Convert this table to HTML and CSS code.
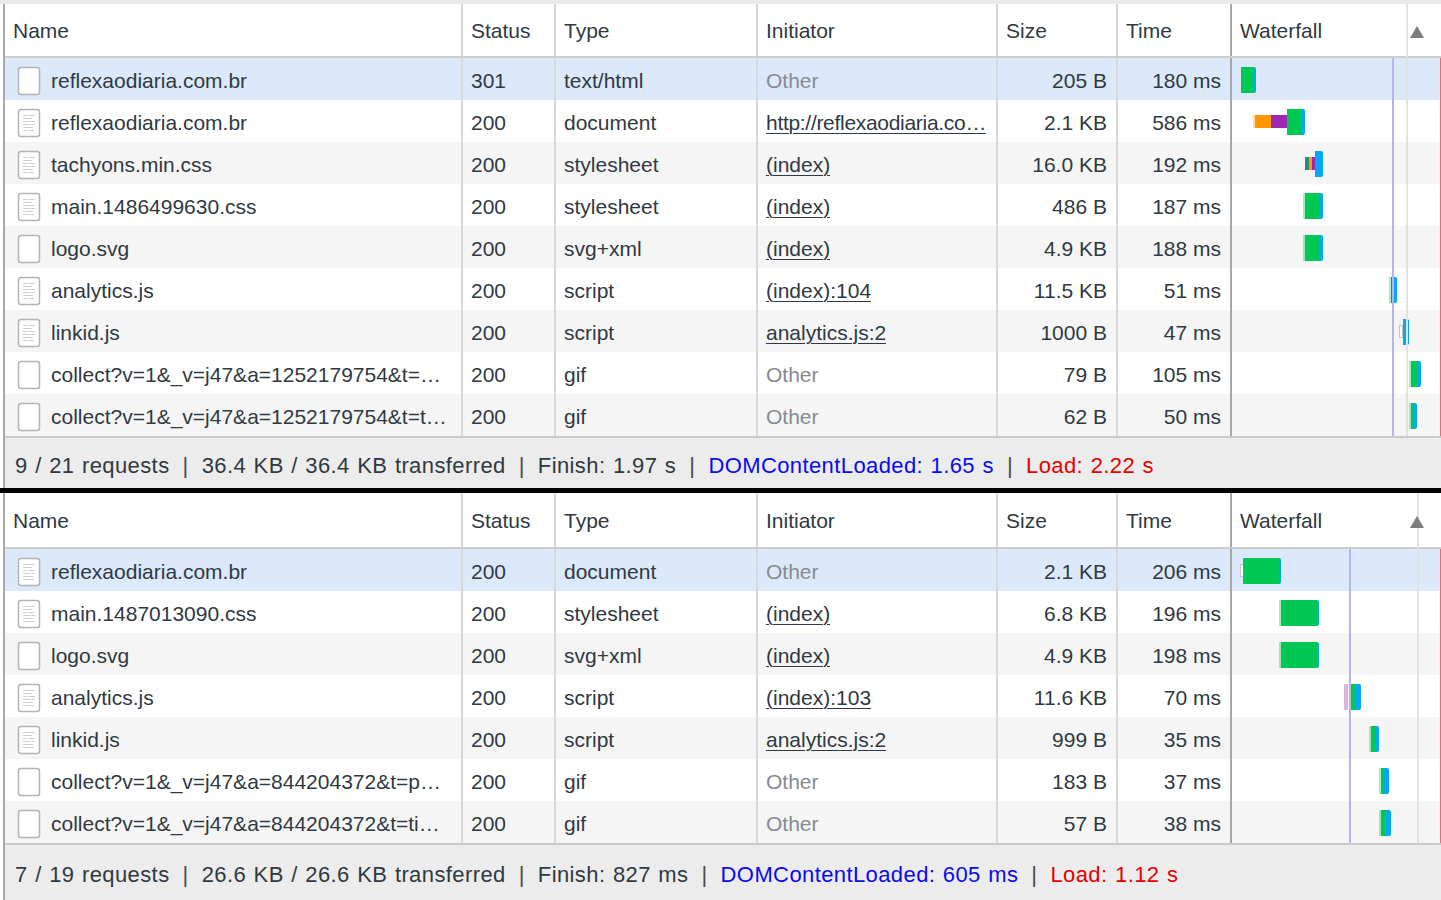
FILE: index.html
```html
<!DOCTYPE html>
<html>
<head>
<meta charset="utf-8">
<link rel="stylesheet" href="styles.css">
</head>
<body>
<div class="strip"></div>

<section class="panel panel-a">
  <div class="table">
    <div class="cols head">
      <div class="cell">Name</div>
      <div class="cell">Status</div>
      <div class="cell">Type</div>
      <div class="cell">Initiator</div>
      <div class="cell">Size</div>
      <div class="cell time">Time</div>
      <div class="cell wf head-wf"><span class="wf-title">Waterfall</span><span class="tri"></span></div>
    </div>
    <div class="body">
      <div class="cols row sel">
        <div class="cell name"><svg class="ico" viewBox="0 0 24 30"><rect x="1.5" y="1.5" width="21" height="27" rx="2.5" fill="#fff" stroke="#b4b4b4" stroke-width="1.5"/></svg><span class="txt">reflexaodiaria.com.br</span></div>
        <div class="cell">301</div>
        <div class="cell">text/html</div>
        <div class="cell"><span class="txt dim">Other</span></div>
        <div class="cell num">205 B</div>
        <div class="cell num time">180 ms</div>
        <div class="cell wf"><span class="bar g" style="left:9px;width:12px"></span><span class="bar b" style="left:21px;width:3px"></span></div>
      </div>
      <div class="cols row">
        <div class="cell name"><svg class="ico" viewBox="0 0 24 30"><rect x="1.5" y="1.5" width="21" height="27" rx="2.5" fill="#fff" stroke="#b4b4b4" stroke-width="1.5"/><path d="M6 7.5h5M12 7.5h6M6 10.5h9M6 13.5h4M11 13.5h7M6 16.5h7M14 16.5h4M6 19.5h10M6 22.5h5M12 22.5h5" stroke="#cfcfcf" stroke-width="1.2"/></svg><span class="txt">reflexaodiaria.com.br</span></div>
        <div class="cell">200</div>
        <div class="cell">document</div>
        <div class="cell ini"><span class="txt link">http://reflexaodiaria.co…</span></div>
        <div class="cell num">2.1 KB</div>
        <div class="cell num time">586 ms</div>
        <div class="cell wf"><span class="bar thin o fade" style="left:21px;width:2px"></span><span class="bar thin o" style="left:23px;width:16px"></span><span class="bar thin p" style="left:39px;width:16px"></span><span class="bar g" style="left:55px;width:15px"></span><span class="bar b" style="left:70px;width:3px"></span></div>
      </div>
      <div class="cols row">
        <div class="cell name"><svg class="ico" viewBox="0 0 24 30"><rect x="1.5" y="1.5" width="21" height="27" rx="2.5" fill="#fff" stroke="#b4b4b4" stroke-width="1.5"/><path d="M6 7.5h5M12 7.5h6M6 10.5h9M6 13.5h4M11 13.5h7M6 16.5h7M14 16.5h4M6 19.5h10M6 22.5h5M12 22.5h5" stroke="#cfcfcf" stroke-width="1.2"/></svg><span class="txt">tachyons.min.css</span></div>
        <div class="cell">200</div>
        <div class="cell">stylesheet</div>
        <div class="cell"><span class="txt link">(index)</span></div>
        <div class="cell num">16.0 KB</div>
        <div class="cell num time">192 ms</div>
        <div class="cell wf"><span class="bar thin t" style="left:73px;width:4px"></span><span class="bar thin o" style="left:77px;width:3px"></span><span class="bar thin p" style="left:80px;width:3px"></span><span class="bar b" style="left:83px;width:8px"></span></div>
      </div>
      <div class="cols row">
        <div class="cell name"><svg class="ico" viewBox="0 0 24 30"><rect x="1.5" y="1.5" width="21" height="27" rx="2.5" fill="#fff" stroke="#b4b4b4" stroke-width="1.5"/><path d="M6 7.5h5M12 7.5h6M6 10.5h9M6 13.5h4M11 13.5h7M6 16.5h7M14 16.5h4M6 19.5h10M6 22.5h5M12 22.5h5" stroke="#cfcfcf" stroke-width="1.2"/></svg><span class="txt">main.1486499630.css</span></div>
        <div class="cell">200</div>
        <div class="cell">stylesheet</div>
        <div class="cell"><span class="txt link">(index)</span></div>
        <div class="cell num">486 B</div>
        <div class="cell num time">187 ms</div>
        <div class="cell wf"><span class="bar g fade" style="left:71px;width:2px"></span><span class="bar g" style="left:73px;width:14px"></span><span class="bar b" style="left:87px;width:4px"></span></div>
      </div>
      <div class="cols row">
        <div class="cell name"><svg class="ico" viewBox="0 0 24 30"><rect x="1.5" y="1.5" width="21" height="27" rx="2.5" fill="#fff" stroke="#b4b4b4" stroke-width="1.5"/></svg><span class="txt">logo.svg</span></div>
        <div class="cell">200</div>
        <div class="cell">svg+xml</div>
        <div class="cell"><span class="txt link">(index)</span></div>
        <div class="cell num">4.9 KB</div>
        <div class="cell num time">188 ms</div>
        <div class="cell wf"><span class="bar g fade" style="left:71px;width:2px"></span><span class="bar g" style="left:73px;width:14px"></span><span class="bar b" style="left:87px;width:4px"></span></div>
      </div>
      <div class="cols row">
        <div class="cell name"><svg class="ico" viewBox="0 0 24 30"><rect x="1.5" y="1.5" width="21" height="27" rx="2.5" fill="#fff" stroke="#b4b4b4" stroke-width="1.5"/><path d="M6 7.5h5M12 7.5h6M6 10.5h9M6 13.5h4M11 13.5h7M6 16.5h7M14 16.5h4M6 19.5h10M6 22.5h5M12 22.5h5" stroke="#cfcfcf" stroke-width="1.2"/></svg><span class="txt">analytics.js</span></div>
        <div class="cell">200</div>
        <div class="cell">script</div>
        <div class="cell"><span class="txt link">(index):104</span></div>
        <div class="cell num">11.5 KB</div>
        <div class="cell num time">51 ms</div>
        <div class="cell wf"><span class="bar g fade" style="left:157px;width:2px"></span><span class="bar t" style="left:159px;width:1px"></span><span class="bar b" style="left:160px;width:5px"></span></div>
      </div>
      <div class="cols row">
        <div class="cell name"><svg class="ico" viewBox="0 0 24 30"><rect x="1.5" y="1.5" width="21" height="27" rx="2.5" fill="#fff" stroke="#b4b4b4" stroke-width="1.5"/><path d="M6 7.5h5M12 7.5h6M6 10.5h9M6 13.5h4M11 13.5h7M6 16.5h7M14 16.5h4M6 19.5h10M6 22.5h5M12 22.5h5" stroke="#cfcfcf" stroke-width="1.2"/></svg><span class="txt">linkid.js</span></div>
        <div class="cell">200</div>
        <div class="cell">script</div>
        <div class="cell"><span class="txt link">analytics.js:2</span></div>
        <div class="cell num">1000 B</div>
        <div class="cell num time">47 ms</div>
        <div class="cell wf"><span class="bar thin q" style="left:167px;width:4px"></span><span class="bar b" style="left:171px;width:6px"></span></div>
      </div>
      <div class="cols row">
        <div class="cell name"><svg class="ico" viewBox="0 0 24 30"><rect x="1.5" y="1.5" width="21" height="27" rx="2.5" fill="#fff" stroke="#b4b4b4" stroke-width="1.5"/></svg><span class="txt">collect?v=1&amp;_v=j47&amp;a=1252179754&amp;t=…</span></div>
        <div class="cell">200</div>
        <div class="cell">gif</div>
        <div class="cell"><span class="txt dim">Other</span></div>
        <div class="cell num">79 B</div>
        <div class="cell num time">105 ms</div>
        <div class="cell wf"><span class="bar g fade" style="left:177px;width:2px"></span><span class="bar g" style="left:179px;width:7px"></span><span class="bar b" style="left:186px;width:3px"></span></div>
      </div>
      <div class="cols row">
        <div class="cell name"><svg class="ico" viewBox="0 0 24 30"><rect x="1.5" y="1.5" width="21" height="27" rx="2.5" fill="#fff" stroke="#b4b4b4" stroke-width="1.5"/></svg><span class="txt">collect?v=1&amp;_v=j47&amp;a=1252179754&amp;t=t…</span></div>
        <div class="cell">200</div>
        <div class="cell">gif</div>
        <div class="cell"><span class="txt dim">Other</span></div>
        <div class="cell num">62 B</div>
        <div class="cell num time">50 ms</div>
        <div class="cell wf"><span class="bar g fade" style="left:177px;width:2px"></span><span class="bar g" style="left:179px;width:2px"></span><span class="bar b" style="left:181px;width:4px"></span></div>
      </div>
    </div>
    <div class="wf-overlay">
      <span class="vline grid" style="left:174px"></span>
      <span class="vline dcl" style="left:160px"></span>
      <span class="vline load" style="left:208px"></span>
    </div>
  </div>
  <div class="footer">
    <span>9 / 21 requests</span><span class="sep">|</span>
    <span>36.4 KB / 36.4 KB transferred</span><span class="sep">|</span>
    <span>Finish: 1.97 s</span><span class="sep">|</span>
    <span class="blue">DOMContentLoaded: 1.65 s</span><span class="sep">|</span>
    <span class="red">Load: 2.22 s</span>
  </div>
</section>

<div class="divider"></div>

<section class="panel panel-b">
  <div class="table">
    <div class="cols head">
      <div class="cell">Name</div>
      <div class="cell">Status</div>
      <div class="cell">Type</div>
      <div class="cell">Initiator</div>
      <div class="cell">Size</div>
      <div class="cell time">Time</div>
      <div class="cell wf head-wf"><span class="wf-title">Waterfall</span><span class="tri"></span></div>
    </div>
    <div class="body">
      <div class="cols row sel">
        <div class="cell name"><svg class="ico" viewBox="0 0 24 30"><rect x="1.5" y="1.5" width="21" height="27" rx="2.5" fill="#fff" stroke="#b4b4b4" stroke-width="1.5"/><path d="M6 7.5h5M12 7.5h6M6 10.5h9M6 13.5h4M11 13.5h7M6 16.5h7M14 16.5h4M6 19.5h10M6 22.5h5M12 22.5h5" stroke="#cfcfcf" stroke-width="1.2"/></svg><span class="txt">reflexaodiaria.com.br</span></div>
        <div class="cell">200</div>
        <div class="cell">document</div>
        <div class="cell"><span class="txt dim">Other</span></div>
        <div class="cell num">2.1 KB</div>
        <div class="cell num time">206 ms</div>
        <div class="cell wf"><span class="bar thin q" style="left:8px;width:4px"></span><span class="bar g" style="left:11px;width:36px"></span><span class="bar b" style="left:47px;width:2px"></span></div>
      </div>
      <div class="cols row">
        <div class="cell name"><svg class="ico" viewBox="0 0 24 30"><rect x="1.5" y="1.5" width="21" height="27" rx="2.5" fill="#fff" stroke="#b4b4b4" stroke-width="1.5"/><path d="M6 7.5h5M12 7.5h6M6 10.5h9M6 13.5h4M11 13.5h7M6 16.5h7M14 16.5h4M6 19.5h10M6 22.5h5M12 22.5h5" stroke="#cfcfcf" stroke-width="1.2"/></svg><span class="txt">main.1487013090.css</span></div>
        <div class="cell">200</div>
        <div class="cell">stylesheet</div>
        <div class="cell"><span class="txt link">(index)</span></div>
        <div class="cell num">6.8 KB</div>
        <div class="cell num time">196 ms</div>
        <div class="cell wf"><span class="bar g fade" style="left:47px;width:2px"></span><span class="bar g" style="left:49px;width:36px"></span><span class="bar b" style="left:85px;width:2px"></span></div>
      </div>
      <div class="cols row">
        <div class="cell name"><svg class="ico" viewBox="0 0 24 30"><rect x="1.5" y="1.5" width="21" height="27" rx="2.5" fill="#fff" stroke="#b4b4b4" stroke-width="1.5"/></svg><span class="txt">logo.svg</span></div>
        <div class="cell">200</div>
        <div class="cell">svg+xml</div>
        <div class="cell"><span class="txt link">(index)</span></div>
        <div class="cell num">4.9 KB</div>
        <div class="cell num time">198 ms</div>
        <div class="cell wf"><span class="bar g fade" style="left:47px;width:2px"></span><span class="bar g" style="left:49px;width:36px"></span><span class="bar b" style="left:85px;width:2px"></span></div>
      </div>
      <div class="cols row">
        <div class="cell name"><svg class="ico" viewBox="0 0 24 30"><rect x="1.5" y="1.5" width="21" height="27" rx="2.5" fill="#fff" stroke="#b4b4b4" stroke-width="1.5"/><path d="M6 7.5h5M12 7.5h6M6 10.5h9M6 13.5h4M11 13.5h7M6 16.5h7M14 16.5h4M6 19.5h10M6 22.5h5M12 22.5h5" stroke="#cfcfcf" stroke-width="1.2"/></svg><span class="txt">analytics.js</span></div>
        <div class="cell">200</div>
        <div class="cell">script</div>
        <div class="cell"><span class="txt link">(index):103</span></div>
        <div class="cell num">11.6 KB</div>
        <div class="cell num time">70 ms</div>
        <div class="cell wf"><span class="bar p fade" style="left:112px;width:4px"></span><span class="bar g" style="left:117px;width:6px"></span><span class="bar b" style="left:123px;width:6px"></span></div>
      </div>
      <div class="cols row">
        <div class="cell name"><svg class="ico" viewBox="0 0 24 30"><rect x="1.5" y="1.5" width="21" height="27" rx="2.5" fill="#fff" stroke="#b4b4b4" stroke-width="1.5"/><path d="M6 7.5h5M12 7.5h6M6 10.5h9M6 13.5h4M11 13.5h7M6 16.5h7M14 16.5h4M6 19.5h10M6 22.5h5M12 22.5h5" stroke="#cfcfcf" stroke-width="1.2"/></svg><span class="txt">linkid.js</span></div>
        <div class="cell">200</div>
        <div class="cell">script</div>
        <div class="cell"><span class="txt link">analytics.js:2</span></div>
        <div class="cell num">999 B</div>
        <div class="cell num time">35 ms</div>
        <div class="cell wf"><span class="bar g fade" style="left:137px;width:2px"></span><span class="bar g" style="left:139px;width:4px"></span><span class="bar b" style="left:143px;width:4px"></span></div>
      </div>
      <div class="cols row">
        <div class="cell name"><svg class="ico" viewBox="0 0 24 30"><rect x="1.5" y="1.5" width="21" height="27" rx="2.5" fill="#fff" stroke="#b4b4b4" stroke-width="1.5"/></svg><span class="txt">collect?v=1&amp;_v=j47&amp;a=844204372&amp;t=p…</span></div>
        <div class="cell">200</div>
        <div class="cell">gif</div>
        <div class="cell"><span class="txt dim">Other</span></div>
        <div class="cell num">183 B</div>
        <div class="cell num time">37 ms</div>
        <div class="cell wf"><span class="bar g fade" style="left:147px;width:2px"></span><span class="bar g" style="left:149px;width:3px"></span><span class="bar b" style="left:152px;width:5px"></span></div>
      </div>
      <div class="cols row">
        <div class="cell name"><svg class="ico" viewBox="0 0 24 30"><rect x="1.5" y="1.5" width="21" height="27" rx="2.5" fill="#fff" stroke="#b4b4b4" stroke-width="1.5"/></svg><span class="txt">collect?v=1&amp;_v=j47&amp;a=844204372&amp;t=ti…</span></div>
        <div class="cell">200</div>
        <div class="cell">gif</div>
        <div class="cell"><span class="txt dim">Other</span></div>
        <div class="cell num">57 B</div>
        <div class="cell num time">38 ms</div>
        <div class="cell wf"><span class="bar g fade" style="left:147px;width:2px"></span><span class="bar g" style="left:149px;width:5px"></span><span class="bar b" style="left:154px;width:5px"></span></div>
      </div>
    </div>
    <div class="wf-overlay">
      <span class="vline grid" style="left:185px"></span>
      <span class="vline dcl" style="left:117px"></span>
      <span class="vline load" style="left:208px"></span>
    </div>
  </div>
  <div class="footer">
    <span>7 / 19 requests</span><span class="sep">|</span>
    <span>26.6 KB / 26.6 KB transferred</span><span class="sep">|</span>
    <span>Finish: 827 ms</span><span class="sep">|</span>
    <span class="blue">DOMContentLoaded: 605 ms</span><span class="sep">|</span>
    <span class="red">Load: 1.12 s</span>
  </div>
</section>
</body>
</html>
```

FILE: styles.css
```css
html, body {
  margin: 0;
  padding: 0;
  background: #fff;
  overflow: hidden;
}
body {
  width: 1441px;
  height: 900px;
  font-family: "Liberation Sans", Arial, sans-serif;
  font-size: 21px;
  color: #303942;
}
.strip {
  height: 4px;
  background: #e9e9e9;
}
.panel {
  margin-left: 3px;
  border-left: 2px solid #a9a9a9;
}
.table {
  position: relative;
}
.cols {
  display: grid;
  grid-template-columns: 458px 93px 202px 240px 120px 114px 209px;
}
.head {
  height: 52px;
  border-bottom: 2px solid #cdcdcd;
  background: #fff;
}
.head .cell {
  padding-top: 2px;
}
.panel-b .head {
  height: 54px;
}
.cell {
  display: flex;
  align-items: center;
  min-width: 0;
  padding: 0 7px 0 8px;
  border-right: 2px solid #d8d8d8;
  white-space: nowrap;
  overflow: hidden;
}
.row .cell {
  padding-top: 3px;
}
.cell.time {
  border-right-color: #a7a7a7;
}
.cell.wf {
  position: relative;
  padding: 0;
  border-right: none;
  overflow: visible;
}
.head .cell.head-wf {
  padding: 2px 0 0 8px;
}
.wf-title {
  position: relative;
  z-index: 1;
}
.tri {
  position: relative;
  z-index: 1;
  margin: 2px 17px 0 auto;
  width: 0;
  height: 0;
  border-left: 7px solid transparent;
  border-right: 7px solid transparent;
  border-bottom: 12px solid #7c7c7c;
}
.row {
  height: 42px;
  background: #fff;
}
.row:nth-child(odd) {
  background: #f5f5f5;
}
.row.sel {
  background: #dbe9fb;
}
.row .cell.name {
  padding: 0 8px 0 12px;
  gap: 10px;
}
.name .txt {
  padding-top: 3px;
}
.ico {
  flex: none;
  width: 24px;
  height: 30px;
  margin-top: 3px;
}
.txt {
  min-width: 0;
  overflow: hidden;
  text-overflow: ellipsis;
}
.row .cell.ini {
  padding-right: 2px;
}
.ini .txt {
  letter-spacing: -0.3px;
}
.dim {
  color: #868b91;
}
.link {
  text-decoration: underline;
  text-underline-offset: 3px;
  text-decoration-thickness: 1px;
}
.row .cell.num {
  justify-content: flex-end;
  padding-right: 9px;
}
.bar {
  position: absolute;
  top: 9px;
  height: 26px;
}
.bar.thin {
  top: 15px;
  height: 13px;
}
.g { background: #00c853; }
.b { background: #03a9f4; border-radius: 0 2px 2px 0; }
.o { background: #ff9800; }
.p { background: #9c27b0; }
.t { background: #2a8a80; }
.q {
  box-sizing: border-box;
  border: 1px solid #c4c4c4;
  background: #fff;
}
.fade { opacity: 0.35; }
.wf-overlay {
  position: absolute;
  top: 0;
  right: 0;
  bottom: 0;
  width: 209px;
  pointer-events: none;
}
.vline {
  position: absolute;
  bottom: 0;
  width: 2px;
}
.vline.grid {
  top: 0;
  background: #e2e2e2;
}
.vline.dcl {
  top: 54px;
  background: #b4b4f2;
}
.vline.load {
  top: 54px;
  width: 1px;
  background: #e27070;
}
.panel-b .vline.dcl,
.panel-b .vline.load {
  top: 56px;
}
.footer {
  box-sizing: border-box;
  display: flex;
  align-items: center;
  height: 52px;
  padding: 5px 0 0 10px;
  border-top: 2px solid #cbcbcb;
  background: #ececec;
  white-space: nowrap;
  font-size: 22px;
  letter-spacing: 0.4px;
  word-spacing: 1px;
}
.panel-b .footer {
  height: 57px;
}
.sep {
  margin: 0 13px;
  color: #4a4a4a;
}
.blue { color: #0a0aee; }
.red { color: #e60000; }
.divider {
  height: 5px;
  background: #000;
}
```
